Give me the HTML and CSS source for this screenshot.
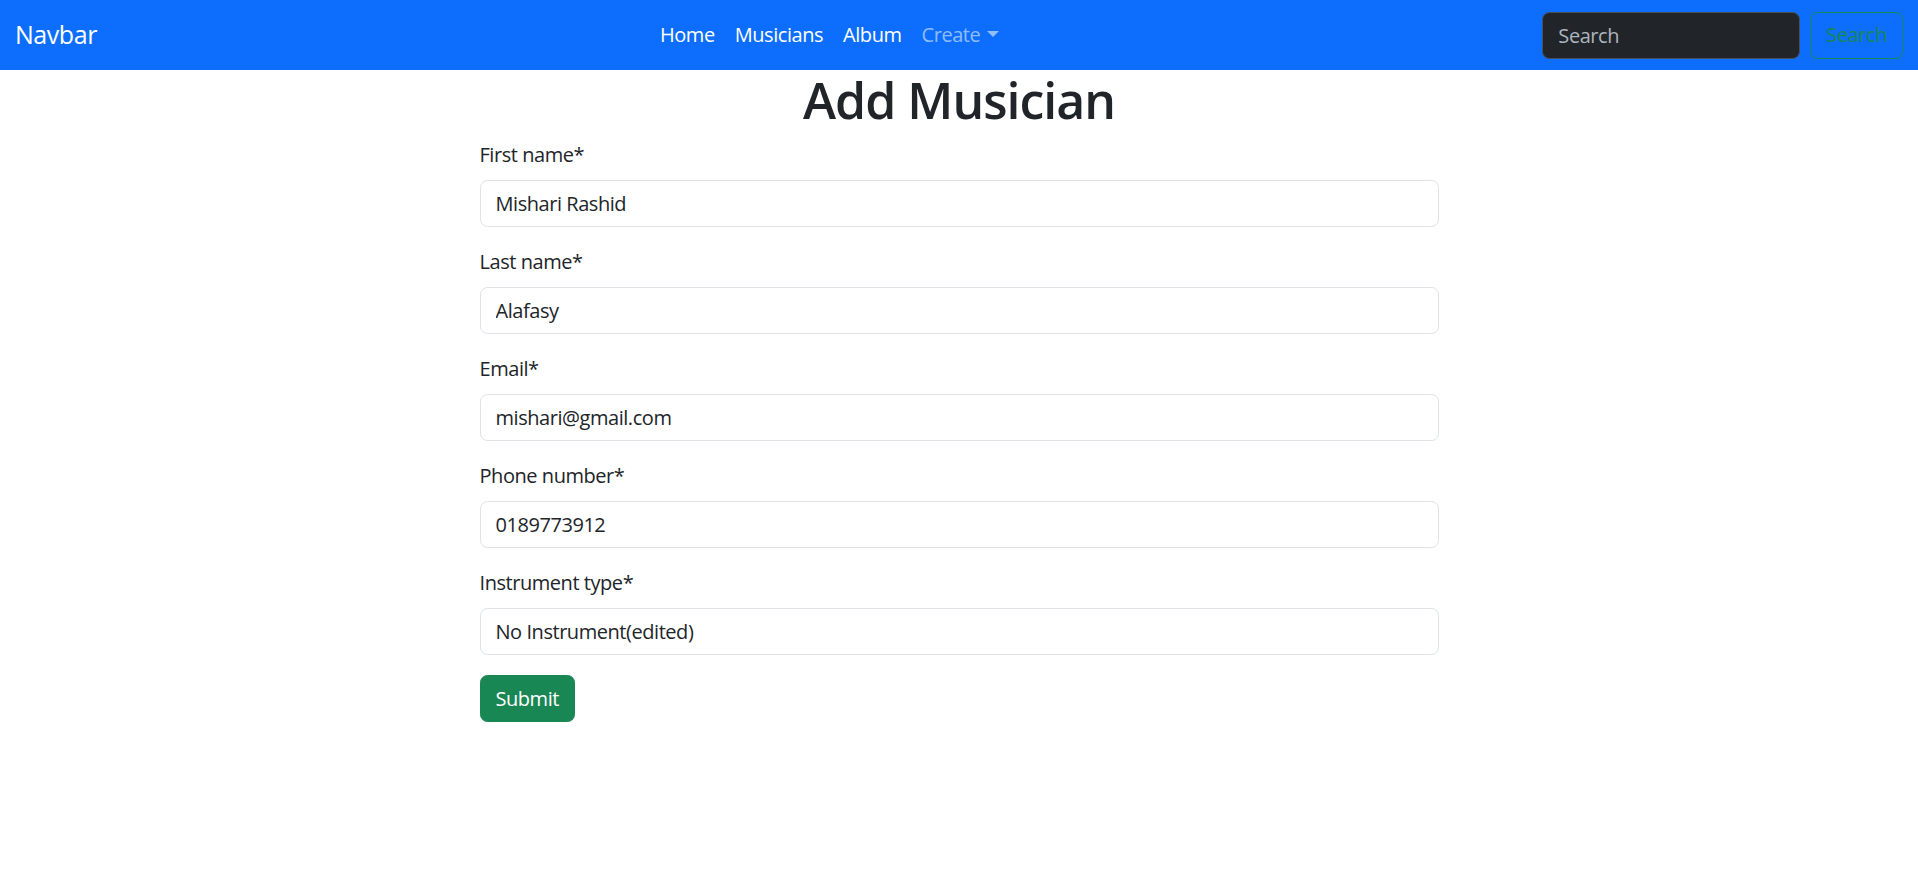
FILE: index.html
```html
<!DOCTYPE html>
<html lang="en">
<head>
<meta charset="utf-8">
<title>Add Musician</title>
<link rel="stylesheet" href="styles.css">
</head>
<body>
<nav class="navbar">
  <div class="nav-inner">
    <a class="brand" href="#">Navbar</a>
    <ul class="nav-links">
      <li><a class="nav-link active" href="#">Home</a></li>
      <li><a class="nav-link active" href="#">Musicians</a></li>
      <li><a class="nav-link active" href="#">Album</a></li>
      <li><a class="nav-link dropdown" href="#">Create</a></li>
    </ul>
    <form class="search-form">
      <input class="search-input" type="search" placeholder="Search">
      <button class="search-btn" type="button">Search</button>
    </form>
  </div>
</nav>
<main class="page">
  <h1 class="title">Add Musician</h1>
  <form class="musician-form">
    <div class="field">
      <label class="label">First name*</label>
      <input class="control" type="text" value="Mishari Rashid">
    </div>
    <div class="field">
      <label class="label">Last name*</label>
      <input class="control" type="text" value="Alafasy">
    </div>
    <div class="field">
      <label class="label">Email*</label>
      <input class="control" type="text" value="mishari@gmail.com">
    </div>
    <div class="field">
      <label class="label">Phone number*</label>
      <input class="control" type="text" value="0189773912">
    </div>
    <div class="field">
      <label class="label">Instrument type*</label>
      <input class="control" type="text" value="No Instrument(edited)">
    </div>
    <button class="submit" type="button">Submit</button>
  </form>
</main>
</body>
</html>
```
FILE: styles.css
```css
* { box-sizing: border-box; }
html, body { margin: 0; padding: 0; }
body {
  font-family: "Open Sans", "Noto Sans", sans-serif;
  font-size: 20px;
  line-height: 30px;
  letter-spacing: -0.45px;
  color: #212529;
  background: #fff;
}
.navbar {
  background: #0d6efd;
  padding: 10px 0;
  height: 70px;
}
.nav-inner {
  display: flex;
  align-items: center;
  padding: 0 15px;
  height: 50px;
}
.brand {
  font-size: 25px;
  line-height: 37.5px;
  padding: 6.25px 0;
  margin-right: 20px;
  color: #fff;
  text-decoration: none;
}
.nav-links {
  list-style: none;
  margin: 0 auto;
  padding: 0;
  display: flex;
}
.nav-link {
  display: block;
  padding: 10px 10px;
  color: #fff;
  text-decoration: none;
  font-size: 20px;
  line-height: 30px;
}
.nav-link.dropdown { color: rgba(255,255,255,0.55); }
.nav-link.dropdown::after {
  content: "";
  display: inline-block;
  margin-left: 7px;
  vertical-align: 0.255em;
  border-top: 0.3em solid;
  border-right: 0.3em solid transparent;
  border-left: 0.3em solid transparent;
  border-bottom: 0;
}
.search-form {
  display: flex;
  align-items: center;
  gap: 10px;
}
.search-input {
  width: 258px;
  height: 47px;
  padding: 7.5px 15px;
  font: inherit;
  font-size: 20px;
  letter-spacing: inherit;
  color: #dee2e6;
  background: #212529;
  border: 1px solid #495057;
  border-radius: 7.5px;
  outline: none;
}
.search-input::placeholder { color: #adb5bd; }
.search-btn {
  height: 47px;
  padding: 7.5px 15px;
  font: inherit;
  font-size: 20px;
  letter-spacing: inherit;
  color: #198754;
  background: transparent;
  border: 1px solid #198754;
  border-radius: 7.5px;
}
.page {
  width: 959px;
  margin: 0 auto;
}
.title {
  margin: 0 0 10px;
  font-size: 50px;
  line-height: 60px;
  font-weight: 600;
  letter-spacing: -1px;
  text-align: center;
}
.musician-form { display: flex; flex-direction: column; align-items: flex-start; }
.field { width: 100%; margin-bottom: 20px; }
.label {
  display: block;
  margin-bottom: 10px;
  line-height: 30px;
}
.control {
  display: block;
  width: 100%;
  height: 47px;
  padding: 7.5px 15px;
  font: inherit;
  font-size: 20px;
  line-height: 30px;
  letter-spacing: inherit;
  color: #212529;
  background: #fff;
  border: 1px solid #dee2e6;
  border-radius: 7.5px;
  outline: none;
}
.submit {
  height: 47px;
  padding: 7.5px 15px;
  font: inherit;
  font-size: 20px;
  line-height: 30px;
  letter-spacing: inherit;
  color: #fff;
  background: #198754;
  border: 1px solid #198754;
  border-radius: 7.5px;
}
```
